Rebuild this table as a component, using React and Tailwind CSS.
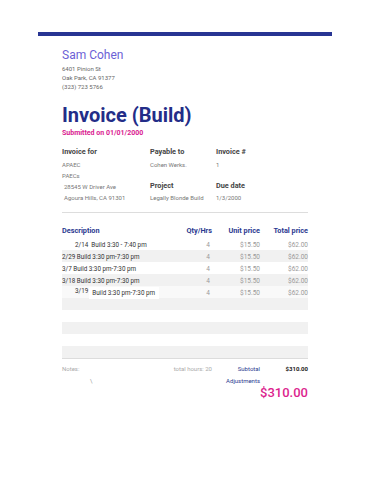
import React from "react";

const rows = [
    { desc: "2/14  Build 3:30 - 7:40 pm", indent: true },
    { desc: "2/29 Build 3:30 pm-7:30 pm" },
    { desc: "3/7 Build 3:30 pm-7:30 pm" },
    { desc: "3/18 Build 3:30 pm-7:30 pm" },
    { desc: "3/19", special: true },
];

function ItemRow({ item, index }) {
    const gray = index % 2 === 1;
    return (
        <div
            className={
                "grid grid-cols-[1fr_50px_48px_48px] h-[12px] items-center text-[6.3px] leading-[12px] " +
                (gray ? "bg-[#f1f1f1]" : item.special ? "bg-[#f9f9f9]" : "bg-white")
            }
        >
            {item.special ? (
                <div className="flex items-stretch h-[12px] pl-[13px] text-[#333]">
                    <span className="leading-[9px]">3/19</span>
                    <span className="bg-white pl-[3px] pr-[4px] ml-[1px] leading-[13px]">Build 3:30 pm-7:30 pm</span>
                </div>
            ) : (
                <div className={"whitespace-pre text-[#333] " + (item.indent ? "pl-[13px]" : "")}>{item.desc}</div>
            )}
            {item.desc || item.special ? (
                <>
                    <div className="text-right pr-[2px] text-[6.5px] text-[#999] leading-[14px]">4</div>
                    <div className="text-right text-[6.5px] text-[#999] leading-[14px]">$15.50</div>
                    <div className="text-right text-[6.5px] text-[#999] leading-[10px]">$62.00</div>
                </>
            ) : null}
        </div>
    );
}

function App() {
    const empty = [{}, {}, {}, {}, {}];
    return (
        <div className="w-[370px] h-[479px] bg-white font-['Roboto',sans-serif] overflow-hidden">
            <div className="pt-[32px] px-[38px]">
                <div className="h-[4px] bg-[#283593]"></div>
                <div className="px-[24px]">
                    <div className="mt-[12px] text-[12px] leading-[14px] text-[#6c5fd6]">Sam Cohen</div>
                    <div className="mt-[1.5px] text-[6px] leading-[9px] text-[#666]">
                        <div>6401 Pinion St</div>
                        <div>Oak Park, CA 91377</div>
                        <div>(323) 723 5766</div>
                    </div>

                    <h1 className="mt-[12px] text-[20px] leading-[24px] font-bold text-[#232d88]">Invoice (Build)</h1>
                    <p className="mt-[1.5px] text-[7px] leading-[10px] font-bold text-[#d9208f]">
                        Submitted on 01/01/2000
                    </p>

                    <div className="mt-[8px] grid grid-cols-[88px_66px_1fr] grid-rows-[12px_13px_9px_12px_10px] items-center text-[6px] text-[#777]">
                        <div className="text-[7.3px] font-bold text-[#444]">Invoice for</div>
                        <div className="text-[7.3px] font-bold text-[#444]">Payable to</div>
                        <div className="text-[7.3px] font-bold text-[#444]">Invoice #</div>

                        <div>APAEC</div>
                        <div>Cohen Werks.</div>
                        <div>1</div>

                        <div>PAECs</div>
                        <div></div>
                        <div></div>

                        <div className="pl-[2px]">28545 W Driver Ave</div>
                        <div className="text-[7.3px] font-bold text-[#444]">Project</div>
                        <div className="text-[7.3px] font-bold text-[#444]">Due date</div>

                        <div className="pl-[2px]">Agoura Hills, CA 91301</div>
                        <div>Legally Blonde Build</div>
                        <div>1/3/2000</div>
                    </div>

                    <div className="mt-[10px] border-t border-[#dddddd]"></div>

                    <div className="mt-[11px] grid grid-cols-[1fr_50px_48px_48px] h-[14px] items-center text-[7.3px] font-bold text-[#2b3990]">
                        <div>Description</div>
                        <div className="text-right">Qty/Hrs</div>
                        <div className="text-right">Unit price</div>
                        <div className="text-right">Total price</div>
                    </div>

                    <div className="border-b border-[#dcdcdc]">
                        {rows.concat(empty).map((item, i) => (
                            <ItemRow key={i} item={item} index={i} />
                        ))}
                    </div>

                    <div className="mt-[3px] grid grid-cols-[1fr_50px_48px_48px] h-[12px] items-center text-[6px]">
                        <div className="text-[#aaa]">Notes:</div>
                        <div className="text-right text-[#aaa] whitespace-nowrap">total hours: 20</div>
                        <div className="text-right text-[#2b3990]">Subtotal</div>
                        <div className="text-right font-bold text-[#222]">$310.00</div>
                    </div>
                    <div className="grid grid-cols-[1fr_50px_48px_48px] h-[12px] items-center text-[6px]">
                        <div className="pl-[28px] text-[#999]">\</div>
                        <div></div>
                        <div className="text-right text-[#2b3990] whitespace-nowrap">Adjustments</div>
                        <div></div>
                    </div>
                    <div className="h-[14px] text-right text-[13px] leading-[14px] font-medium text-[#dc1f8e]">
                        $310.00
                    </div>
                </div>
            </div>
        </div>
    );
}

export default App;
